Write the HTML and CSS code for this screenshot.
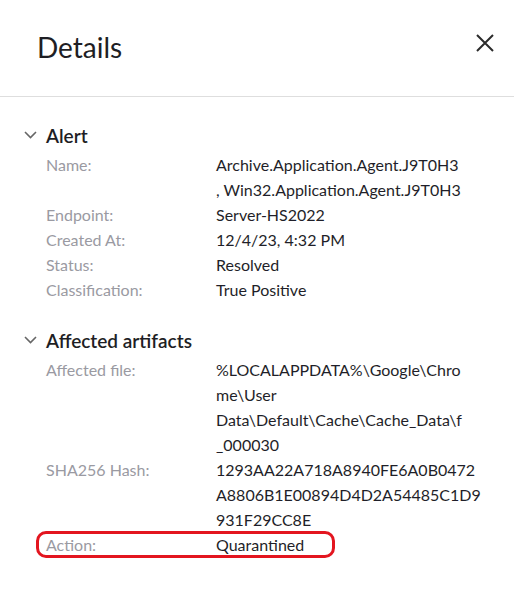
FILE: index.html
```html
<!DOCTYPE html>
<html>
<head>
<meta charset="utf-8">
<link rel="stylesheet" href="styles.css">
</head>
<body>
<div class="panel">
  <header class="head">
    <h1 class="title">Details</h1>
    <button class="close" aria-label="Close">
      <svg width="18" height="18" viewBox="0 0 18 18"><path d="M1 1L17 17M17 1L1 17" stroke="#2b2b2b" stroke-width="2" fill="none"/></svg>
    </button>
  </header>
  <div class="body">
    <section class="section">
      <div class="sec-head">
        <svg class="chev" width="13" height="8" viewBox="0 0 13 8"><path d="M1 1L6.5 6.5L12 1" stroke="#666" stroke-width="1.6" fill="none"/></svg>
        <h2 class="sec-title">Alert</h2>
      </div>
      <div class="rows">
        <div class="row"><div class="lbl">Name:</div><div class="val">Archive.Application.Agent.J9T0H3<br>, Win32.Application.Agent.J9T0H3</div></div>
        <div class="row"><div class="lbl">Endpoint:</div><div class="val">Server-HS2022</div></div>
        <div class="row"><div class="lbl">Created At:</div><div class="val">12/4/23, 4:32 PM</div></div>
        <div class="row"><div class="lbl">Status:</div><div class="val">Resolved</div></div>
        <div class="row"><div class="lbl">Classification:</div><div class="val">True Positive</div></div>
      </div>
    </section>
    <section class="section">
      <div class="sec-head">
        <svg class="chev" width="13" height="8" viewBox="0 0 13 8"><path d="M1 1L6.5 6.5L12 1" stroke="#666" stroke-width="1.6" fill="none"/></svg>
        <h2 class="sec-title">Affected artifacts</h2>
      </div>
      <div class="rows">
        <div class="row"><div class="lbl">Affected file:</div><div class="val">%LOCALAPPDATA%\Google\Chro<br>me\User<br>Data\Default\Cache\Cache_Data\f<br>_000030</div></div>
        <div class="row"><div class="lbl">SHA256 Hash:</div><div class="val">1293AA22A718A8940FE6A0B0472<br>A8806B1E00894D4D2A54485C1D9<br>931F29CC8E</div></div>
        <div class="row highlight"><div class="lbl">Action:</div><div class="val">Quarantined</div></div>
      </div>
    </section>
  </div>
</div>
</body>
</html>
```
FILE: styles.css
```css
html, body {
  margin: 0;
  padding: 0;
  background: #fff;
}
body {
  font-family: Lato, "Open Sans", sans-serif;
  color: #1f1f29;
  width: 514px;
  height: 590px;
  overflow: hidden;
}
.panel {
  display: flex;
  flex-direction: column;
}
.head {
  height: 96px;
  border-bottom: 1px solid #dedede;
  display: flex;
  align-items: flex-start;
  justify-content: space-between;
  padding: 0 20px 0 37px;
}
.title {
  margin: 0;
  padding-top: 29px;
  font-size: 28px;
  font-weight: 400;
  line-height: 36px;
  color: #1e1e24;
}
.close {
  border: 0;
  background: none;
  padding: 0;
  margin-top: 34px;
  width: 18px;
  height: 18px;
  cursor: pointer;
}
.close svg { display: block; }
.body {
  padding: 25px 0 0 24px;
  display: flex;
  flex-direction: column;
  gap: 25px;
}
.sec-head {
  display: flex;
  align-items: center;
  gap: 9px;
  height: 26px;
}
.chev { display: block; }
.sec-title {
  margin: 0;
  font-size: 19px;
  font-weight: 600;
  color: #1e1e24;
}
.rows {
  padding-left: 22px;
  padding-top: 4px;
}
.row {
  display: grid;
  grid-template-columns: 170px 1fr;
  line-height: 25px;
  font-size: 16px;
  position: relative;
  width: 270px;
}
.lbl { color: #9a9aa2; }
.val { color: #1f1f29; white-space: nowrap; }
.highlight::after {
  content: "";
  position: absolute;
  left: -10px;
  top: -1px;
  width: 299px;
  height: 27px;
  box-sizing: border-box;
  border: 3px solid #e3151f;
  border-radius: 10px;
}
```
